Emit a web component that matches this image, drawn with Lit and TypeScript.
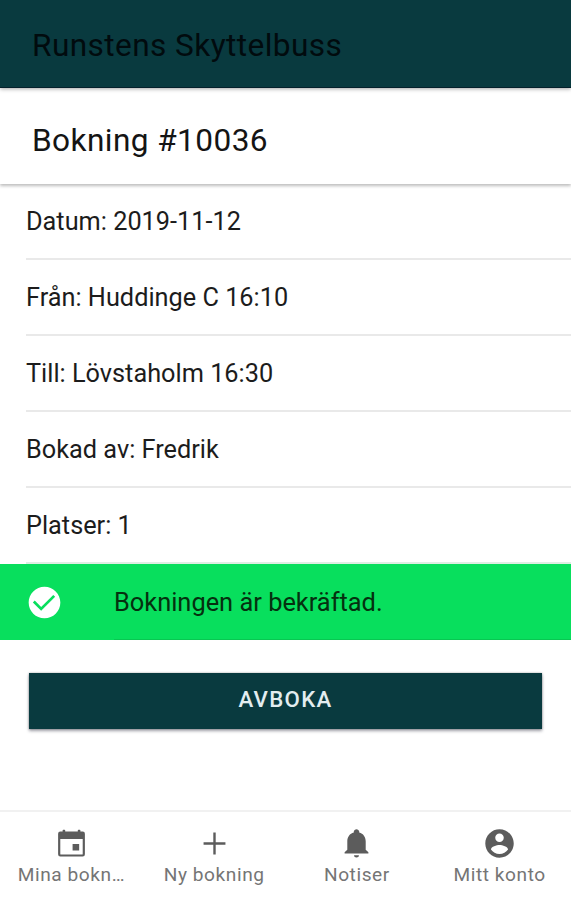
import { LitElement, html, css, svg } from "lit";
import { customElement } from "lit/decorators.js";

const icons = {
  check:
    "M256 48C141.6 48 48 141.6 48 256s93.6 208 208 208 208-93.6 208-208S370.4 48 256 48zM103 256L128 231L212 315L371 156L396 181L212 365z",
  calendar:
    "M92 80h34V66q0-10 10-10h18q10 0 10 10v14h184V66q0-10 10-10h18q10 0 10 10v14h34q32 0 32 32v302q0 32-32 32H92q-32 0-32-32V112q0-32 32-32zm0 110v218q0 10 10 10h308q10 0 10-10V190zM272 264h96v94h-96z",
  add: "M416 273.500H273.500V416h-35V273.500H96v-35h142.500V96h35v142.500H416v35z",
  bell: "M256 462c20 0 36-13 36-33h-72c0 20 16 33 36 33zm134.600-116V224.800c0-63.400-36-117.500-95-131V79.200c0-17.700-22-33-39.600-33s-39.600 15.300-39.600 33v14.600c-59 13.500-95 67.600-95 131V346L82 384v18h348v-18l-39.400-38z",
  contact:
    "M256 48C141.6 48 48 141.6 48 256s93.6 208 208 208 208-93.6 208-208S370.4 48 256 48zm0 62.400c34.300 0 62.400 28.100 62.400 62.400s-28.100 62.400-62.400 62.400-62.400-28.100-62.400-62.400 28.100-62.400 62.400-62.400zm0 300.400c-52 0-97.800-27-124.800-66.600 1-41.600 83.200-64.500 124.800-64.500s123.800 22.900 124.800 64.500c-27 39.600-72.800 66.600-124.800 66.600z",
};

const icon = (d: string) =>
  html`<svg class="icon" viewBox="0 0 512 512" aria-hidden="true">${svg`<path d=${d} fill-rule="evenodd"></path>`}</svg>`;

const details = [
  "Datum: 2019-11-12",
  "Från: Huddinge C 16:10",
  "Till: Lövstaholm 16:30",
  "Bokad av: Fredrik",
  "Platser: 1",
];

const tabs = [
  { label: "Mina bokn…", path: icons.calendar },
  { label: "Ny bokning", path: icons.add },
  { label: "Notiser", path: icons.bell },
  { label: "Mitt konto", path: icons.contact },
];

@customElement("app-root")
export class AppRoot extends LitElement {
  static styles = css`
    :host {
      display: flex;
      flex-direction: column;
      height: 100vh;
      overflow: hidden;
      background: #fff;
      color: #1c1c1c;
      font-family: Roboto, "Liberation Sans", sans-serif;
      font-size: 25.3px;
    }
    * {
      box-sizing: border-box;
    }
    .icon {
      display: block;
      fill: currentColor;
      flex: none;
    }
    .bar,
    .title {
      display: flex;
      align-items: center;
      flex: none;
      padding: 3px 32px 0;
      font-size: 31.6px;
      letter-spacing: 0.42px;
      white-space: nowrap;
    }
    .bar {
      height: 88px;
      background: #093a3f;
      color: #010b0e;
      border-bottom: 1px solid #04202b;
      box-shadow: 0 1px 4px rgba(0, 0, 0, 0.35);
      z-index: 1;
    }
    .title {
      height: 96px;
      padding-top: 8px;
      color: #141414;
      box-shadow: 0 2px 3px rgba(0, 0, 0, 0.26);
    }
    .details {
      flex: none;
      margin: 0;
      padding: 0 0 0 26px;
      list-style: none;
    }
    .detail {
      display: flex;
      align-items: center;
      height: 76px;
      border-bottom: 2px solid #e9e9e9;
      white-space: nowrap;
    }
    .detail:last-child {
      border-bottom-color: #dfeee3;
    }
    .status {
      display: flex;
      flex: none;
      height: 76px;
      padding-left: 25px;
      background: #08df5d;
      color: #05300f;
    }
    .status .icon {
      width: 39px;
      height: 39px;
      align-self: center;
      margin-right: 50px;
      color: #fff;
    }
    .message {
      display: flex;
      flex: 1;
      align-items: center;
      border-bottom: 1px solid #08c752;
      font-size: 25.4px;
    }
    .cancel {
      flex: none;
      height: 56px;
      margin: 33px 29px 0;
      padding: 0 0 5px;
      border: 0;
      background: #093a3f;
      color: #e3edf0;
      font: 500 22.2px Roboto, "Liberation Sans", sans-serif;
      letter-spacing: 1.33px;
      box-shadow: 0 2px 3px rgba(20, 20, 40, 0.4), 0 0 2px rgba(0, 0, 0, 0.3);
    }
    .tabs {
      display: grid;
      grid-template-columns: repeat(4, minmax(0, 1fr));
      height: 90px;
      margin-top: auto;
      border-top: 2px solid #f1f1f1;
      color: #5c5c5c;
    }
    .tab {
      display: flex;
      flex-direction: column;
      align-items: center;
      padding: 14px 8px 0;
    }
    .tab .icon {
      width: 35px;
      height: 35px;
    }
    .label {
      white-space: nowrap;
      color: #757575;
      font-size: 19.1px;
      line-height: 27px;
      letter-spacing: 0.57px;
    }
  `;

  render() {
    return html`
      <header class="bar">Runstens Skyttelbuss</header>
      <div class="title">Bokning #10036</div>
      <ul class="details">
        ${details.map((text) => html`<li class="detail">${text}</li>`)}
      </ul>
      <div class="status">
        ${icon(icons.check)}
        <div class="message">Bokningen är bekräftad.</div>
      </div>
      <button class="cancel">AVBOKA</button>
      <nav class="tabs">
        ${tabs.map(
          (tab) => html`<div class="tab">${icon(tab.path)}<span class="label">${tab.label}</span></div>`
        )}
      </nav>
    `;
  }
}
